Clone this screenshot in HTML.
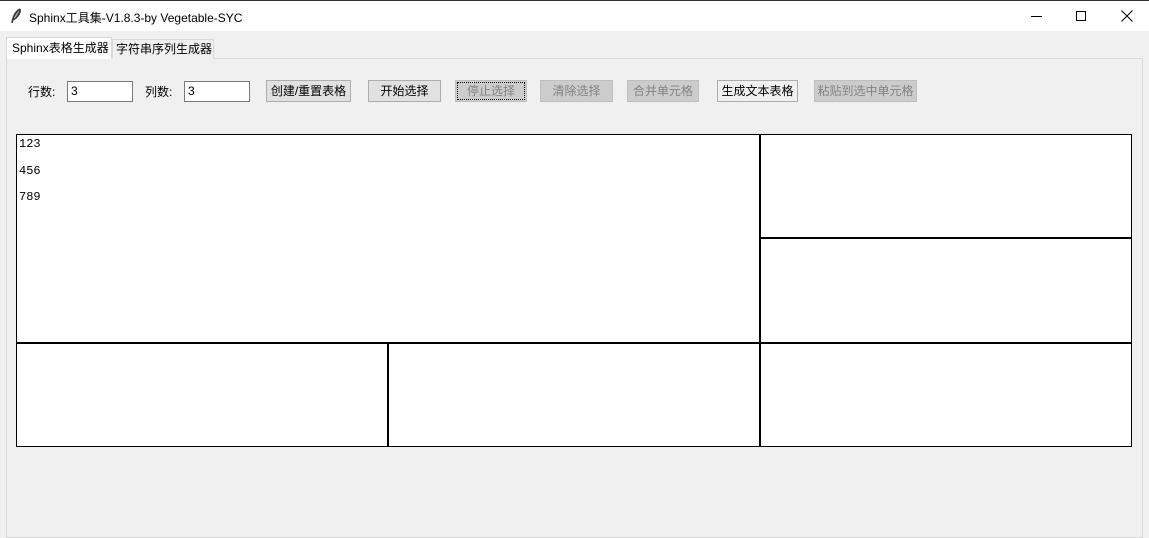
<!DOCTYPE html>
<html><head><meta charset="utf-8"><style>
*{margin:0;padding:0;box-sizing:border-box}
body{width:1149px;height:529px;background:#f0f0f0;position:relative;overflow:hidden;font-family:"Liberation Sans","Noto Sans CJK SC",sans-serif;font-size:12px;color:#000}
.a{position:absolute}
.title{left:0;top:0;width:1149px;height:31px;background:#fff;border-top:1px solid #333}
.btn{position:absolute;top:80px;height:22px;background:#e1e1e1;border:1px solid #adadad;text-align:center;line-height:20px;font-size:12px}
.dis{color:#838383;background:#cccccc;border-color:#bfbfbf}
.ent{position:absolute;top:81px;height:21px;background:#fff;border:1px solid #7a7a7a;padding-left:3px;line-height:19px}
.l{position:absolute;background:#000}
</style></head><body>
<div class="a title">
<svg class="a" style="left:10px;top:7px" width="12" height="16" viewBox="0 0 12 16"><path d="M10 1 C6 3 3 8 2 15 M10 1 C11 5 7 10 3 12" stroke="#333" stroke-width="1.5" fill="#777"/></svg>
<div class="a" style="left:29px;top:8px;font-size:12px">Sphinx工具集-V1.8.3-by Vegetable-SYC</div>
<div class="a" style="left:1031px;top:15px;width:11px;height:1px;background:#000"></div>
<div class="a" style="left:1076px;top:10px;width:10px;height:10px;border:1px solid #000"></div>
<svg class="a" style="left:1121px;top:9px" width="12" height="12"><path d="M0.5 0.5L11.5 11.5M11.5 0.5L0.5 11.5" stroke="#000"/></svg>
</div>
<div class="a" style="left:6px;top:58px;width:1137px;height:480px;border:1px solid #d9d9d9;background:#f0f0f0"></div>
<div class="a" style="left:112px;top:39px;width:102px;height:20px;border:1px solid #d9d9d9;border-bottom:none;background:#f0f0f0;line-height:18px;padding-left:3px">字符串序列生成器</div>
<div class="a" style="left:6px;top:37px;width:106px;height:22px;border:1px solid #d9d9d9;border-bottom:none;background:#fff;line-height:20px;padding-left:5px">Sphinx表格生成器</div>
<div class="a" style="left:28px;top:83px">行数:</div>
<div class="ent" style="left:67px;width:66px">3</div>
<div class="a" style="left:145px;top:83px">列数:</div>
<div class="ent" style="left:184px;width:66px">3</div>
<div class="btn" style="left:266px;width:85px">创建/重置表格</div>
<div class="btn" style="left:368px;width:73px">开始选择</div>
<div class="btn dis" style="left:455px;width:72px;outline:1px dotted #000;outline-offset:-3px">停止选择</div>
<div class="btn dis" style="left:540px;width:73px">清除选择</div>
<div class="btn dis" style="left:627px;width:72px">合并单元格</div>
<div class="btn" style="left:717px;width:81px;background:#f0f0f0">生成文本表格</div>
<div class="btn dis" style="left:814px;width:103px">粘贴到选中单元格</div>
<div class="a" style="left:16px;top:134px;width:1116px;height:313px;background:#fff;border:1px solid #000"></div>
<div class="l" style="left:759px;top:134px;width:2px;height:313px"></div>
<div class="l" style="left:760px;top:237px;width:372px;height:2px"></div>
<div class="l" style="left:16px;top:342px;width:1116px;height:2px"></div>
<div class="l" style="left:387px;top:342px;width:2px;height:105px"></div>
<div class="a" style="left:19px;top:131px;font-family:'Liberation Mono',monospace;font-size:12px;line-height:26.5px">123<br>456<br>789</div>
</body></html>
